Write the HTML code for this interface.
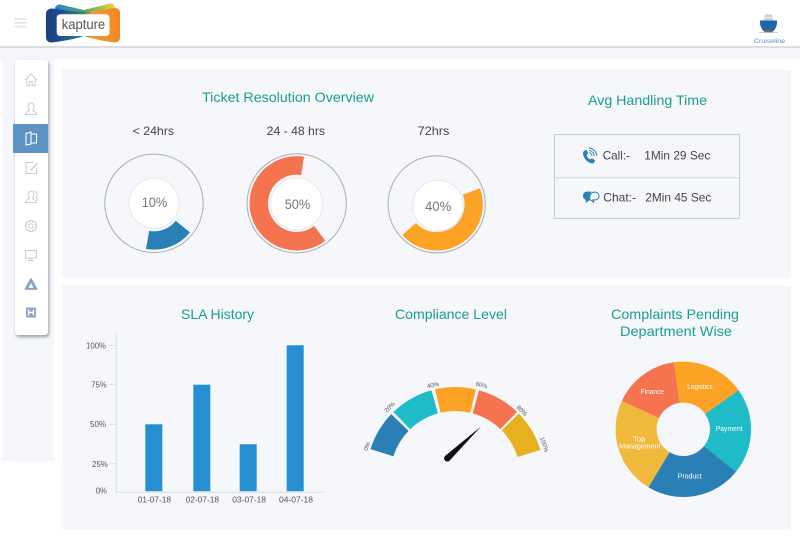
<!DOCTYPE html>
<html><head><meta charset="utf-8"><title>Dashboard</title>
<style>
html,body{margin:0;padding:0;background:#fff;width:800px;height:538px;overflow:hidden}
.a{position:absolute}
svg{position:absolute;left:0;top:0;overflow:hidden}
text{font-family:"Liberation Sans",Arial,sans-serif}
</style></head>
<body>
<div class="a" style="left:0;top:46px;width:800px;height:1.5px;background:#dcdee3"></div>
<div class="a" style="left:0;top:47.5px;width:800px;height:11px;background:#f5f6fa"></div>
<div class="a" style="left:2px;top:58px;width:52px;height:403px;background:#f6f7fc"></div>
<div class="a" style="left:62px;top:69px;width:729px;height:209px;background:#f5f7fb"></div>
<div class="a" style="left:62px;top:285px;width:729px;height:245px;background:#f5f7fb"></div>
<div class="a" style="left:15px;top:60px;width:33px;height:275px;background:#fff;border-radius:3px;box-shadow:1px 2px 3px rgba(60,70,90,.5)"></div>
<div class="a" style="left:13px;top:124px;width:35px;height:29px;background:#5c93c3"></div>

<svg width="800" height="538" viewBox="0 0 800 538">
<defs>
<linearGradient id="lg1" x1="0" x2="1" y1="0" y2="0"><stop offset="0" stop-color="#1b3f7d"/><stop offset=".2" stop-color="#1c4f93"/><stop offset=".5" stop-color="#2f8a66"/><stop offset=".62" stop-color="#e8a02a"/><stop offset="1" stop-color="#f58426"/></linearGradient>
<linearGradient id="lg2" x1="0" x2="1" y1="0" y2="0"><stop offset="0" stop-color="#1c86cf"/><stop offset=".5" stop-color="#5da76a"/><stop offset="1" stop-color="#fbd433"/></linearGradient>
</defs>

<!-- hamburger -->
<g stroke="#dfe5ec" stroke-width="1.6"><path d="M14.5 19H27M14.5 22.8H27M14.5 26.6H27"/></g>

<!-- logo -->
<path d="M54 10Q56 4 60 4.5L84 10L110 3.5Q114 3 116 10L84 16Z" fill="url(#lg2)"/>
<path d="M52 8.500Q46 9 46 14V37Q46 42.500 52 42.500Q72 40 84 36Q96 40 114 42.500Q120 42.500 120 37V13Q120 8 114 8Q96 11 84 12Q68 11 52 8.500Z" fill="url(#lg1)"/>
<rect x="56.700" y="14.200" width="52.800" height="21.800" rx="3.500" fill="#fff"/>
<text x="61.700" y="29" font-size="14" fill="#555" textLength="43.500" lengthAdjust="spacingAndGlyphs">kapture</text>

<!-- ship -->
<path d="M763.500 21L765 14.500H772L773.500 21Z" fill="#c9d2da"/>
<path d="M764.500 17.500H772.500" stroke="#eef1f4" stroke-width="1"/>
<path d="M760 20.500H777Q777.500 27 773.500 31H763.500Q759.500 27 760 20.500Z" fill="#1f67a8"/>
<path d="M763.500 30.500H773.500L772.500 32.500H764.500Z" fill="#8a6a6a"/>
<path d="M759 32.500H778" stroke="#9fc2de" stroke-width=".8"/>
<text x="754" y="43" font-size="6.500" fill="#4f93c4" textLength="31" lengthAdjust="spacingAndGlyphs">Cruiseline</text>

<!-- sidebar icons -->
<g fill="none" stroke="#c3ced8" stroke-width="1">
<path d="M25 80L31 74L37 80M26.800 79V85.500H29.800V81.500H32.200V85.500H35.200V79"/>
<path d="M28 106.500C28 101.500 34 101.500 34 106.500C34 108.500 33 109.500 32.500 110.500C33.500 111.500 36.500 111.500 36.500 114.500H25.500C25.500 111.500 28.500 111.500 29.500 110.500C29 109.500 28 108.500 28 106.500Z"/>
<path d="M26 168V162.500H34M26 162.500V173.500H36.500V167.500" />
<path d="M30 170L37 162.500L38 163.500L31 171Z" fill="#c3ced8" stroke="none"/>
<path d="M28 194.500C28 190 34 190 34 194.500C34 196.500 33 197.500 32.500 198.500C33.500 199.500 36.500 199.500 36.500 202.500H25.500C25.500 199.500 28.500 199.500 29.500 198.500C29 197.500 28 196.500 28 194.500Z"/>
<path d="M34.500 191C37 191.500 37.500 195 36 197.500C37 198.500 38 199 38 201"/>
<circle cx="31" cy="226" r="2.200"/>
<path d="M29.600 220.500H32.400L32.900 222L34.400 221.300L36 223L35.200 224.400L36.600 225V227.200L35.200 227.800L36 229.200L34.400 230.800L32.900 230.100L32.400 231.500H29.600L29.100 230.100L27.600 230.800L26 229.200L26.800 227.800L25.400 227.200V225L26.800 224.400L26 223L27.600 221.300L29.100 222Z"/>
<rect x="25.500" y="250.500" width="11" height="7.500"/>
<path d="M31 258V260.500M28 260.500H34"/>
</g>
<g fill="none" stroke="#fff" stroke-width="1.100">
<path d="M26 133.500L31 132V144L26 145Z"/>
<path d="M31 134H36.500V143H31"/>
</g>
<path d="M31 279L36.500 289H25.500Z" fill="#8aa5bf" stroke="#8aa5bf" stroke-width="1.800" stroke-linejoin="round"/>
<path d="M31 283L33.500 288H28.500Z" fill="#f5f7fb"/>
<rect x="26" y="307.500" width="10" height="10" fill="#8aa5bf" rx="1"/>
<path d="M28.500 309.500V315.500M33.500 309.500V315.500M28.500 312.500H33.500" stroke="#fff" stroke-width="1.400"/>

<!-- Titles -->
<g fill="#1b9d8f" font-size="14">
<text x="202" y="102" textLength="172" lengthAdjust="spacingAndGlyphs">Ticket Resolution Overview</text>
<text x="588" y="105" textLength="119" lengthAdjust="spacingAndGlyphs">Avg Handling Time</text>
<text x="181" y="319" textLength="73" lengthAdjust="spacingAndGlyphs">SLA History</text>
<text x="395" y="319" textLength="112" lengthAdjust="spacingAndGlyphs">Compliance Level</text>
<text x="611" y="319" textLength="128" lengthAdjust="spacingAndGlyphs">Complaints Pending</text>
<text x="620" y="336" textLength="112" lengthAdjust="spacingAndGlyphs">Department Wise</text>
</g>

<!-- Donut headers -->
<g fill="#444" font-size="12">
<text x="132.700" y="135" textLength="41.300" lengthAdjust="spacingAndGlyphs">&lt; 24hrs</text>
<text x="266.700" y="135" textLength="58.300" lengthAdjust="spacingAndGlyphs">24 - 48 hrs</text>
<text x="417.700" y="135" textLength="31.600" lengthAdjust="spacingAndGlyphs">72hrs</text>
</g>

<!-- Donuts -->
<circle cx="154" cy="203.300" r="49.200" fill="none" stroke="#a9adb3" stroke-width="1"/>
<circle cx="154" cy="203.300" r="37.150" fill="none" stroke="#2a7fb4" stroke-width="18.300" pathLength="360" stroke-dasharray="61 360" transform="rotate(38.900 154 203.300)"/>
<circle cx="154" cy="203.300" r="25" fill="#fff" stroke="#e6e8ec" stroke-width="1"/>
<text x="141.700" y="207" font-size="14" fill="#777" textLength="25.600" lengthAdjust="spacingAndGlyphs">10%</text>

<circle cx="296.700" cy="203.300" r="49.600" fill="none" stroke="#a9adb3" stroke-width="1"/>
<circle cx="296.700" cy="203.300" r="37.900" fill="none" stroke="#f5734f" stroke-width="18.500" pathLength="360" stroke-dasharray="226.400 360" transform="rotate(52.500 296.700 203.300)"/>
<circle cx="296.700" cy="204" r="26" fill="#fff" stroke="#e6e8ec" stroke-width="1"/>
<text x="284.700" y="209" font-size="14" fill="#777" textLength="25.600" lengthAdjust="spacingAndGlyphs">50%</text>

<circle cx="436.700" cy="204.300" r="48.600" fill="none" stroke="#a9adb3" stroke-width="1"/>
<circle cx="436.700" cy="204.300" r="37" fill="none" stroke="#fca326" stroke-width="18.300" pathLength="360" stroke-dasharray="158.500 360" transform="rotate(339.700 436.700 204.300)"/>
<circle cx="438" cy="205.500" r="25.300" fill="#fff" stroke="#e6e8ec" stroke-width="1"/>
<text x="425" y="211" font-size="14" fill="#777" textLength="26.300" lengthAdjust="spacingAndGlyphs">40%</text>

<!-- Avg handling table -->
<rect x="554.500" y="134.500" width="185" height="84" fill="none" stroke="#c2ced9" stroke-width="1"/>
<path d="M554.500 177.700H739.500" stroke="#c9d4de" stroke-width="1"/>
<g fill="#444" font-size="12">
<text x="602.700" y="159.300" textLength="27.300" lengthAdjust="spacingAndGlyphs">Call:-</text>
<text x="644.300" y="159.300" textLength="66" lengthAdjust="spacingAndGlyphs">1Min 29 Sec</text>
<text x="603.300" y="201.300" textLength="32.700" lengthAdjust="spacingAndGlyphs">Chat:-</text>
<text x="645.300" y="201.300" textLength="66" lengthAdjust="spacingAndGlyphs">2Min 45 Sec</text>
</g>
<!-- phone icon -->
<path d="M584.500 150.500L587 150L588 153.500L586.500 155C587 157 588.500 158.500 590 159.500L592 158.300L595 160.500L594 163Q592 164 589 162.500Q584 159.500 583 154Q583 151.500 584.500 150.500Z" fill="#2a7fb4"/>
<g fill="none" stroke="#2a7fb4" stroke-width=".9"><path d="M589 152.500A4 4 0 0 1 592 156"/><path d="M589 150.200A6.500 6.500 0 0 1 594.300 156"/><path d="M589 148A9 9 0 0 1 597 156"/></g>
<!-- chat icon -->
<path d="M588 191.500C584 191.500 583 194 583 196C583 198 585 199.800 586 200L585.500 203L589.500 200.200H591C589 198 589 193.500 592 191.700Z" fill="#2a7fb4"/>
<path d="M594 192C597.500 192 599 194 599 196.200C599 198.500 597 200 594 200H592.800L594 202.500L590.500 200C589 198.500 589 193.500 594 192Z" fill="#f5f7fb" stroke="#2a7fb4" stroke-width="1"/>

<!-- Bar chart -->
<path d="M116.300 334V492M116 492.200H322.700" stroke="#d8dce2" stroke-width="1" fill="none"/>
<path d="M109 345.300H116M109 384.700H116M109 424.300H116M109 463.700H116" stroke="#d8dce2" stroke-width=".8"/>
<g fill="#258fd0">
<rect x="145.300" y="424.300" width="17" height="66.900"/>
<rect x="193.300" y="384.700" width="17" height="106.500"/>
<rect x="239.700" y="444.300" width="17" height="46.900"/>
<rect x="286.700" y="345.300" width="17" height="145.900"/>
</g>
<g fill="#555" font-size="8.500">
<text x="86" y="348.300" textLength="20" lengthAdjust="spacingAndGlyphs">100%</text>
<text x="91.300" y="387.300" textLength="15.400" lengthAdjust="spacingAndGlyphs">75%</text>
<text x="90" y="427" textLength="16" lengthAdjust="spacingAndGlyphs">50%</text>
<text x="92" y="467" textLength="15.700" lengthAdjust="spacingAndGlyphs">25%</text>
<text x="95.700" y="493.700" textLength="11.300" lengthAdjust="spacingAndGlyphs">0%</text>
<text x="137.700" y="502.700" textLength="33.300" lengthAdjust="spacingAndGlyphs">01-07-18</text>
<text x="185.700" y="502.700" textLength="33.300" lengthAdjust="spacingAndGlyphs">02-07-18</text>
<text x="232.300" y="502.700" textLength="33.700" lengthAdjust="spacingAndGlyphs">03-07-18</text>
<text x="279" y="502.700" textLength="34" lengthAdjust="spacingAndGlyphs">04-07-18</text>
</g>

<!-- Gauge -->
<g fill="none" stroke-width="24">
<path d="M381.900 452.700A77 77 0 0 1 399.900 422.500" stroke="#2a7fb4"/>
<path d="M401.800 420.600A77 77 0 0 1 434.700 401.800" stroke="#1fbcc8"/>
<path d="M437.800 401A77 77 0 0 1 473.100 401.100" stroke="#fca326"/>
<path d="M475.800 401.800A77 77 0 0 1 508.700 420.500" stroke="#f5734f"/>
<path d="M510.200 422A77 77 0 0 1 528.900 453.500" stroke="#e6b01f"/>
</g>
<g fill="#555" font-size="6" text-anchor="middle">
<text transform="translate(368.800 447) rotate(-70)">0%</text>
<text transform="translate(391 408.500) rotate(-45)">20%</text>
<text transform="translate(433.500 387) rotate(-12)">40%</text>
<text transform="translate(481 387) rotate(15)">60%</text>
<text transform="translate(520.500 412) rotate(45)">80%</text>
<text transform="translate(542.500 445) rotate(72)">100%</text>
</g>
<path d="M481 426.500L449.600 460.600L445 456Z" fill="#111"/>
<circle cx="447.300" cy="458.300" r="3.200" fill="#111"/>

<!-- Pie -->
<g fill="none" stroke-width="41">
<circle cx="683.300" cy="429.300" r="47.200" stroke="#1fbcc8" pathLength="360" stroke-dasharray="74.300 360" transform="rotate(-35.300 683.300 429.300)"/>
<circle cx="683.300" cy="429.300" r="47.200" stroke="#2a7fb4" pathLength="360" stroke-dasharray="82 360" transform="rotate(39 683.300 429.300)"/>
<circle cx="683.300" cy="429.300" r="47.200" stroke="#f0b93c" pathLength="360" stroke-dasharray="83.900 360" transform="rotate(121 683.300 429.300)"/>
<circle cx="683.300" cy="429.300" r="47.200" stroke="#f5734f" pathLength="360" stroke-dasharray="57.200 360" transform="rotate(204.900 683.300 429.300)"/>
<circle cx="683.300" cy="429.300" r="47.200" stroke="#fca326" pathLength="360" stroke-dasharray="62.600 360" transform="rotate(262.100 683.300 429.300)"/>
</g>
<g fill="#fff" font-size="7">
<text x="640.700" y="394" textLength="23.300" lengthAdjust="spacingAndGlyphs">Finance</text>
<text x="687.300" y="389" textLength="25.400" lengthAdjust="spacingAndGlyphs">Logistics</text>
<text x="715.700" y="431" textLength="27" lengthAdjust="spacingAndGlyphs">Payment</text>
<text x="633.300" y="441.700" textLength="12" lengthAdjust="spacingAndGlyphs">Top</text>
<text x="619.300" y="448.700" textLength="41" lengthAdjust="spacingAndGlyphs">Management</text>
<text x="677.700" y="478.700" textLength="24" lengthAdjust="spacingAndGlyphs">Product</text>
</g>
</svg>
</body></html>
